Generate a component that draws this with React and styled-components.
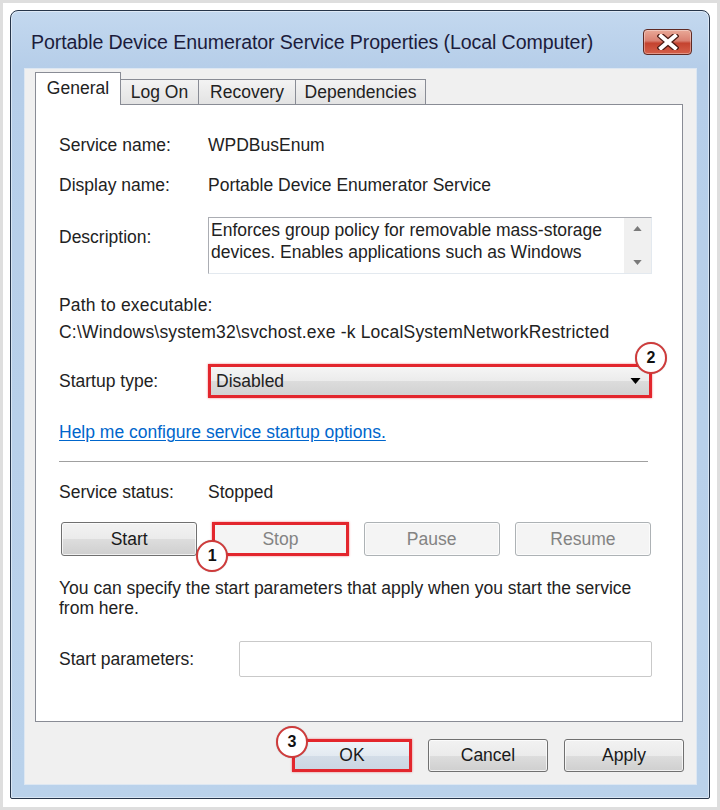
import React from 'react';
import styled, { createGlobalStyle } from 'styled-components';

const Global = createGlobalStyle`
  html, body { margin: 0; padding: 0; background: #fff; }
  body { font-family: "Liberation Sans", Arial, sans-serif; color: #222; }
  * { box-sizing: border-box; }
`;

const Page = styled.div`
  width: 720px;
  height: 810px;
  padding: 7px 7px 8px 7px;
  background: #fff;
  border: 3px solid #dedede;
  display: flex;
`;

const Window = styled.div`
  flex: 1;
  display: flex;
  flex-direction: column;
  padding: 0 12px 13px 13px;
  border: 1px solid #26354a;
  border-radius: 8px 8px 2px 2px;
  background: linear-gradient(to bottom, #c3d8ef 0px, #b6cee9 56px, #bad2eb 100%);
  box-shadow: inset 0 0 0 1px rgba(255, 255, 255, 0.45);
`;

const TitleBar = styled.div`
  height: 57px;
  padding-top: 4px;
  display: flex;
  align-items: center;
  justify-content: space-between;
`;

const Title = styled.div`
  margin-left: 7px;
  font-size: 19.6px;
  line-height: 24px;
  color: #1c1c3c;
  letter-spacing: -0.1px;
  white-space: nowrap;
`;

const CloseButton = styled.div`
  width: 49px;
  height: 26px;
  margin-right: 5px;
  border: 1px solid #5f2a24;
  border-radius: 4px;
  background: linear-gradient(to bottom, #e9a998 0%, #d98071 45%, #c4432f 55%, #d5604a 100%);
  box-shadow: inset 0 0 0 1px rgba(255, 255, 255, 0.35);
  display: flex;
  align-items: center;
  justify-content: center;
`;

const Client = styled.div`
  flex: 1;
  display: flex;
  flex-direction: column;
  background: #f0f0f0;
  border: 1px solid #dde7f2;
  padding: 3px 13px 12px 10px;
`;

const TabStrip = styled.div`
  display: flex;
  align-items: flex-end;
  height: 33px;
  position: relative;
  z-index: 1;
  margin-bottom: -1px;
`;

const Tab = styled.div`
  width: ${p => p.$w}px;
  height: ${p => (p.$active ? 33 : 26)}px;
  margin-left: ${p => (p.$first ? 0 : -1)}px;
  border: 1px solid #898c95;
  border-bottom: ${p => (p.$active ? 'none' : '1px solid #898c95')};
  background: ${p => (p.$active ? '#fff' : 'linear-gradient(to bottom, #f3f3f3, #e3e3e3)')};
  font-size: 17.5px;
  line-height: ${p => (p.$active ? 30 : 25)}px;
  text-align: center;
  color: #222;
  position: relative;
  z-index: ${p => (p.$active ? 2 : 1)};
`;

const Panel = styled.div`
  flex: 1;
  background: #fff;
  border: 1px solid #898c95;
  padding: 30px 30px 0 23px;
  display: flex;
  flex-direction: column;
  font-size: 17.5px;
  color: #222;
`;

const Row = styled.div`
  display: grid;
  grid-template-columns: ${p => p.$label || 149}px 1fr;
  align-items: ${p => (p.$top ? 'start' : 'center')};
  margin-top: ${p => p.$mt || 0}px;
  line-height: 20px;
`;

const Label = styled.div`
  padding-top: ${p => p.$pt || 0}px;
  white-space: nowrap;
`;

const Value = styled.div`
  white-space: nowrap;
`;

const DescBox = styled.div`
  height: 57px;
  width: 444px;
  border: 1px solid #abadb3;
  border-right-color: #e3e9ef;
  border-bottom-color: #e3e9ef;
  display: flex;
  background: #fff;
`;

const DescText = styled.div`
  flex: 1;
  padding: 1px 2px;
  line-height: 22px;
  overflow: hidden;
  white-space: nowrap;
`;

const ScrollBar = styled.div`
  width: 27px;
  background: #f0f0f0;
  display: flex;
  flex-direction: column;
  justify-content: space-between;
  align-items: center;
  padding: 8px 0 8px;
`;

const Block = styled.div`
  margin-top: ${p => p.$mt || 0}px;
  line-height: 27px;
  white-space: nowrap;
  letter-spacing: 0.2px;
`;

const Anchor = styled.div`
  position: relative;
  width: ${p => p.$w}px;
`;

const Select = styled.div`
  height: 34px;
  width: 444px;
  border: 3px solid #e3262d;
  box-shadow: 0 0 2px rgba(227, 38, 45, 0.6);
  background: linear-gradient(to bottom, #f5f5f5 0%, #ebebeb 50%, #dcdcdc 51%, #d2d2d2 100%);
  display: flex;
  align-items: center;
  justify-content: space-between;
  padding: 0 8px 0 5px;
  line-height: 20px;
`;

const Badge = styled.span`
  position: absolute;
  width: 32px;
  height: 32px;
  border-radius: 50%;
  background: #fff;
  border: 2px solid #cf3b3b;
  box-shadow: 0 0 1px rgba(0, 0, 0, 0.3);
  display: flex;
  align-items: center;
  justify-content: center;
  font-weight: bold;
  font-size: 16px;
  color: #111;
  z-index: 3;
  left: ${p => p.$x}px;
  top: ${p => p.$y}px;
`;

const Link = styled.div`
  margin-top: ${p => p.$mt}px;
  line-height: 20px;
  color: #0066cc;
  text-decoration: underline;
  text-underline-offset: 2px;
  white-space: nowrap;
`;

const Separator = styled.div`
  margin-top: ${p => p.$mt}px;
  width: 589px;
  height: 2px;
  border-top: 1px solid #a0a0a0;
  border-bottom: 1px solid #fff;
`;

const ButtonRow = styled.div`
  margin-top: ${p => p.$mt}px;
  margin-left: 2px;
  width: 590px;
  display: grid;
  grid-template-columns: repeat(4, 1fr);
  gap: 15px;
`;

const Button = styled.div`
  height: ${p => p.$h || 34}px;
  width: ${p => (p.$w ? `${p.$w}px` : 'auto')};
  border: ${p => (p.$mark ? '3px solid #e3262d' : p.$disabled ? '1px solid #adb2b5' : '1px solid #707070')};
  border-radius: ${p => (p.$mark ? 0 : 3)}px;
  background: ${p =>
    p.$disabled
      ? '#f4f4f4'
      : p.$default
      ? 'linear-gradient(to bottom, #eef3f8 0%, #e3eaf1 50%, #d3dde8 51%, #cbd6e2 100%)'
      : 'linear-gradient(to bottom, #f2f2f2 0%, #ebebeb 50%, #dddddd 51%, #cfcfcf 100%)'};
  color: ${p => (p.$disabled ? '#838383' : '#1a1a1a')};
  box-shadow: ${p => (p.$mark ? '0 0 2px rgba(227,38,45,0.6)' : 'inset 0 0 0 1px rgba(255,255,255,0.7)')};
  display: flex;
  align-items: center;
  justify-content: center;
  font-size: 17.5px;
  position: relative;
`;

const Paragraph = styled.div`
  margin-top: ${p => p.$mt}px;
  line-height: 20px;
`;

const Input = styled.div`
  height: 36px;
  width: 413px;
  border: 1px solid #c9c9c9;
  border-radius: 2px;
  background: #fff;
`;

const Footer = styled.div`
  margin-top: 17px;
  display: flex;
  justify-content: flex-end;
  gap: 16px;
  margin-right: -1px;
`;

const CloseGlyph = () => (
  <svg width="22" height="16" viewBox="0 0 22 16">
    <path d="M4 2 L18 14 M18 2 L4 14" stroke="#4a1a14" strokeWidth="6.5" strokeLinecap="square" />
    <path d="M4 2 L18 14 M18 2 L4 14" stroke="#fff" strokeWidth="4" strokeLinecap="square" />
  </svg>
);

const Arrow = ({ up, color = '#000', w = 11, h = 6 }) => (
  <svg width={w} height={h} viewBox="0 0 10 6">
    <path d={up ? 'M0 6 L5 0 L10 6 Z' : 'M0 0 L10 0 L5 6 Z'} fill={color} />
  </svg>
);

export default function App() {
  return (
    <>
      <Global />
      <Page>
        <Window>
          <TitleBar>
            <Title>Portable Device Enumerator Service Properties (Local Computer)</Title>
            <CloseButton>
              <CloseGlyph />
            </CloseButton>
          </TitleBar>
          <Client>
            <TabStrip>
              <Tab $w={86} $active $first>General</Tab>
              <Tab $w={79}>Log On</Tab>
              <Tab $w={98}>Recovery</Tab>
              <Tab $w={131}>Dependencies</Tab>
            </TabStrip>
            <Panel>
              <Row>
                <Label>Service name:</Label>
                <Value>WPDBusEnum</Value>
              </Row>
              <Row $mt={20}>
                <Label>Display name:</Label>
                <Value>Portable Device Enumerator Service</Value>
              </Row>
              <Row $mt={22} $top>
                <Label $pt={10}>Description:</Label>
                <DescBox>
                  <DescText>
                    Enforces group policy for removable mass-storage
                    <br />
                    devices. Enables applications such as Windows
                  </DescText>
                  <ScrollBar>
                    <Arrow up color="#7a7a7a" w={9} h={5} />
                    <Arrow color="#7a7a7a" w={9} h={5} />
                  </ScrollBar>
                </DescBox>
              </Row>
              <Block $mt={18}>
                Path to executable:
                <br />
                C:\Windows\system32\svchost.exe -k LocalSystemNetworkRestricted
              </Block>
              <Row $mt={18}>
                <Label>Startup type:</Label>
                <Anchor $w={444}>
                  <Select>
                    <span>Disabled</span>
                    <Arrow />
                  </Select>
                  <Badge $x={427} $y={-22}>2</Badge>
                </Anchor>
              </Row>
              <Link $mt={24}>Help me configure service startup options.</Link>
              <Separator $mt={19} />
              <Row $mt={19}>
                <Label>Service status:</Label>
                <Value>Stopped</Value>
              </Row>
              <ButtonRow $mt={20}>
                <Button>Start</Button>
                <Button $disabled $mark>
                  Stop
                  <Badge $x={-19} $y={15}>1</Badge>
                </Button>
                <Button $disabled>Pause</Button>
                <Button $disabled>Resume</Button>
              </ButtonRow>
              <Paragraph $mt={22}>
                You can specify the start parameters that apply when you start the service
                <br />
                from here.
              </Paragraph>
              <Row $mt={23} $label={180}>
                <Label>Start parameters:</Label>
                <Input />
              </Row>
            </Panel>
            <Footer>
              <Button $w={120} $h={33} $default $mark>
                OK
                <Badge $x={-19} $y={-16}>3</Badge>
              </Button>
              <Button $w={120} $h={33}>Cancel</Button>
              <Button $w={120} $h={33}>Apply</Button>
            </Footer>
          </Client>
        </Window>
      </Page>
    </>
  );
}
